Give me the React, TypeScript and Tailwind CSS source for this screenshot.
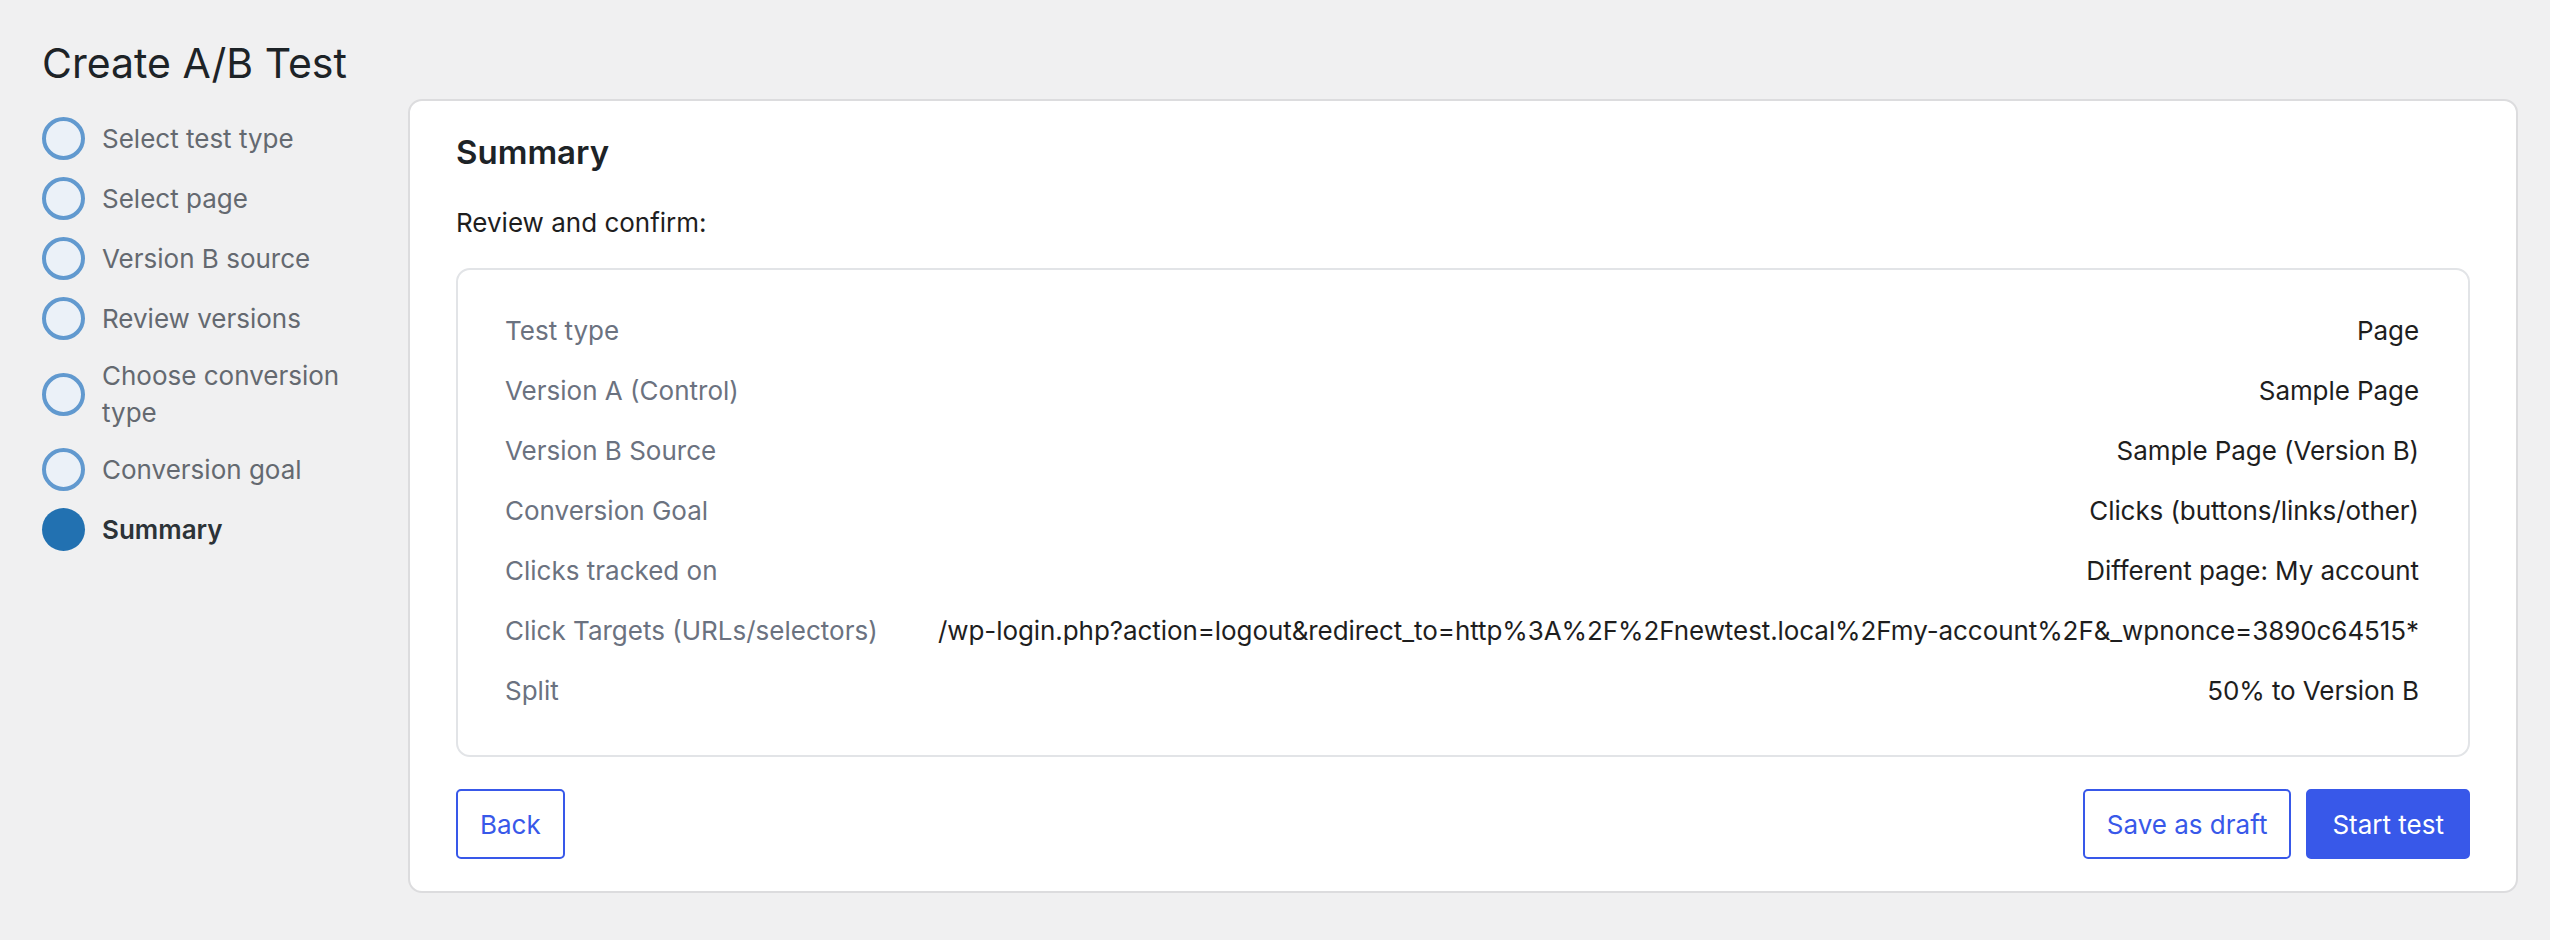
import React from 'react';

interface Step {
  label: string;
  active?: boolean;
}

const steps: Step[] = [
  { label: 'Select test type' },
  { label: 'Select page' },
  { label: 'Version B source' },
  { label: 'Review versions' },
  { label: 'Choose conversion type' },
  { label: 'Conversion goal' },
  { label: 'Summary', active: true },
];

const summaryRows: [string, string][] = [
  ['Test type', 'Page'],
  ['Version A (Control)', 'Sample Page'],
  ['Version B Source', 'Sample Page (Version B)'],
  ['Conversion Goal', 'Clicks (buttons/links/other)'],
  ['Clicks tracked on', 'Different page: My account'],
  [
    'Click Targets (URLs/selectors)',
    '/wp-login.php?action=logout&redirect_to=http%3A%2F%2Fnewtest.local%2Fmy-account%2F&_wpnonce=3890c64515*',
  ],
  ['Split', '50% to Version B'],
];

const App: React.FC = () => {
  return (
    <div
      className="min-h-screen w-full bg-[#f0f0f1] pl-[42px] pr-[32px] pt-[37px] pb-[40px] flex items-start"
      style={{ fontFamily: 'Inter, "Noto Sans", sans-serif' }}
    >
      {/* wizard sidebar */}
      <aside className="w-[320px] shrink-0">
        <h1 className="text-[41px] leading-[52px] font-normal text-[#1d2327] whitespace-nowrap">Create A/B Test</h1>
        <ol className="mt-[28px] flex flex-col gap-[17px]">
          {steps.map((step) => (
            <li key={step.label} className="flex items-center gap-[17px]">
              <span
                className={`w-[43px] h-[43px] shrink-0 rounded-full ${
                  step.active ? 'bg-[#2271b1]' : 'bg-[#ebf1f8] border-[4px] border-[#6199cf]'
                }`}
              />
              <span
                className={`text-[26px] leading-[37px] ${
                  step.active ? 'font-semibold text-[#2c3338]' : 'text-[#646970]'
                }`}
              >
                {step.label}
              </span>
            </li>
          ))}
        </ol>
      </aside>

      {/* summary card */}
      <main className="flex-1 min-w-0 ml-[46px] mt-[62px] bg-white border-2 border-[#dcdcde] rounded-[14px] px-[46px] pt-[31px] pb-[32px]">
        <h2 className="text-[33px] leading-[40px] font-semibold text-[#1d2327]">Summary</h2>
        <p className="mt-[33px] text-[26px] leading-[36px] text-[#1e1e1e]">Review and confirm:</p>

        <div className="mt-[27px] border-2 border-[#e2e4e7] rounded-[14px] pl-[47px] pr-[49px] pt-[43px] pb-[46px]">
          <div className="grid grid-cols-[auto_1fr] gap-x-[36px] gap-y-[24px] text-[26px] leading-[36px]">
            {summaryRows.map(([label, value]) => (
              <React.Fragment key={label}>
                <span className="text-[#6b7280] whitespace-nowrap">{label}</span>
                <span className="text-right text-[#1e1e1e] whitespace-nowrap tracking-[-0.003em]">{value}</span>
              </React.Fragment>
            ))}
          </div>
        </div>

        <div className="mt-[32px] flex items-center justify-between">
          <button className="h-[70px] px-[22px] border-2 border-[#3858e9] rounded-[5px] bg-white text-[26px] text-[#3858e9]">
            Back
          </button>
          <div className="flex items-center gap-[15px]">
            <button className="h-[70px] px-[22px] border-2 border-[#3858e9] rounded-[5px] bg-white text-[26px] text-[#3858e9]">
              Save as draft
            </button>
            <button className="h-[70px] px-[24px] border-2 border-[#3858e9] rounded-[5px] bg-[#3858e9] text-[26px] text-white">
              Start test
            </button>
          </div>
        </div>
      </main>
    </div>
  );
};

export default App;
